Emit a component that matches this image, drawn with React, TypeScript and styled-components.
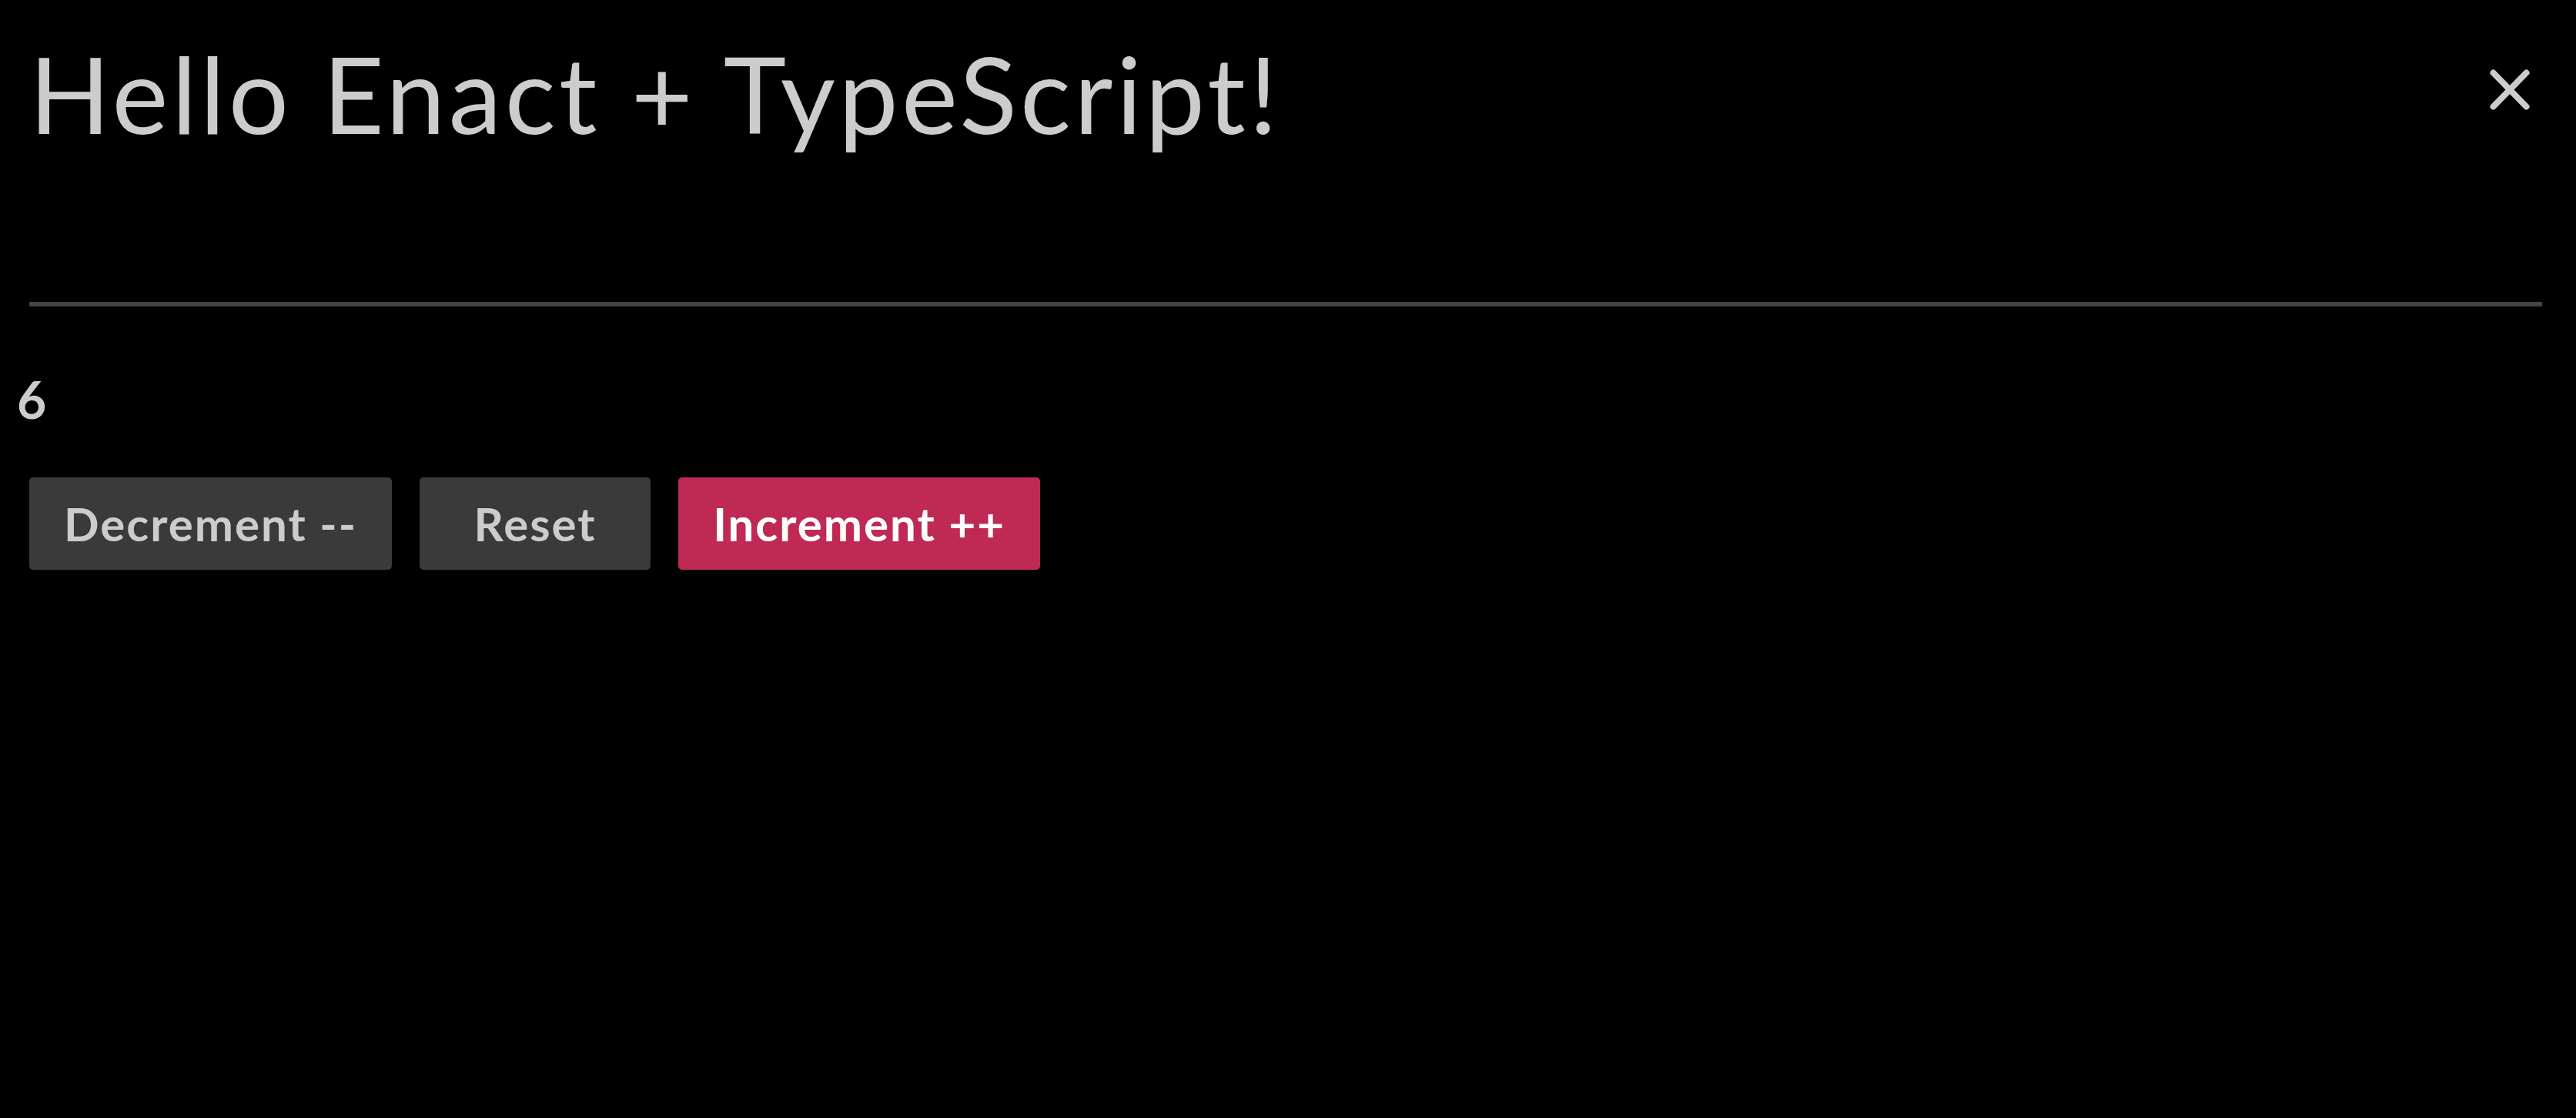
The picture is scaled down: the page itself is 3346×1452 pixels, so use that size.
import React, { useState } from "react";
import styled, { createGlobalStyle } from "styled-components";

const GlobalStyle = createGlobalStyle`
  html, body {
    margin: 0;
    padding: 0;
    background: #000000;
  }
  body {
    font-family: Lato, "Open Sans", sans-serif;
    color: #cccccc;
  }
`;

const Page = styled.div`
  display: flex;
  flex-direction: column;
  min-height: 1452px;
  background: #000000;
`;

const Header = styled.header`
  display: flex;
  flex-direction: column;
  padding: 38px 44px 0 38px;
`;

const TitleRow = styled.div`
  display: flex;
  align-items: flex-start;
  justify-content: space-between;
`;

const Title = styled.h1`
  margin: 0 0 188px 0;
  font-family: Lato, sans-serif;
  font-weight: 400;
  font-size: 138px;
  line-height: 1.2;
  letter-spacing: 4.4px;
  color: #cccccc;
  white-space: nowrap;
`;

const CloseButton = styled.button`
  display: flex;
  align-items: center;
  justify-content: center;
  width: 84px;
  height: 84px;
  margin-top: 36px;
  padding: 0;
  border: none;
  background: transparent;
  cursor: pointer;
`;

const Divider = styled.hr`
  margin: 0;
  border: none;
  height: 6px;
  background: #444444;
`;

const Body = styled.main`
  display: flex;
  flex-direction: column;
  padding: 81px 38px 0 38px;
`;

const Counter = styled.div`
  margin-left: -16px;
  font-family: Lato, sans-serif;
  font-weight: 700;
  font-size: 66px;
  line-height: 1.2;
  color: #cccccc;
`;

const ButtonRow = styled.div`
  display: flex;
  gap: 36px;
  margin-top: 62px;
`;

const Button = styled.button<{ $primary?: boolean }>`
  height: 120px;
  min-width: 300px;
  padding: 0 45px;
  border: none;
  border-radius: 5px;
  background: ${(p) => (p.$primary ? "#bf2a55" : "#3a3a3a")};
  color: ${(p) => (p.$primary ? "#ffffff" : "#cccccc")};
  font-family: Lato, sans-serif;
  font-weight: 700;
  font-size: 60px;
  line-height: 1;
  letter-spacing: 2px;
  white-space: nowrap;
  cursor: pointer;
`;

const CloseIcon = () => (
  <svg width="52" height="53" viewBox="0 0 52 53" aria-hidden="true">
    <g stroke="#cccccc" strokeWidth="8" strokeLinecap="round">
      <line x1="4.5" y1="4.5" x2="47.5" y2="48.5" />
      <line x1="47.5" y1="4.5" x2="4.5" y2="48.5" />
    </g>
  </svg>
);

export default function App() {
  const [count, setCount] = useState(6);
  return (
    <Page>
      <GlobalStyle />
      <Header>
        <TitleRow>
          <Title>Hello Enact + TypeScript!</Title>
          <CloseButton aria-label="Close">
            <CloseIcon />
          </CloseButton>
        </TitleRow>
        <Divider />
      </Header>
      <Body>
        <Counter>{count}</Counter>
        <ButtonRow>
          <Button onClick={() => setCount((c) => c - 1)}>Decrement --</Button>
          <Button onClick={() => setCount(0)}>Reset</Button>
          <Button $primary onClick={() => setCount((c) => c + 1)}>
            Increment ++
          </Button>
        </ButtonRow>
      </Body>
    </Page>
  );
}
